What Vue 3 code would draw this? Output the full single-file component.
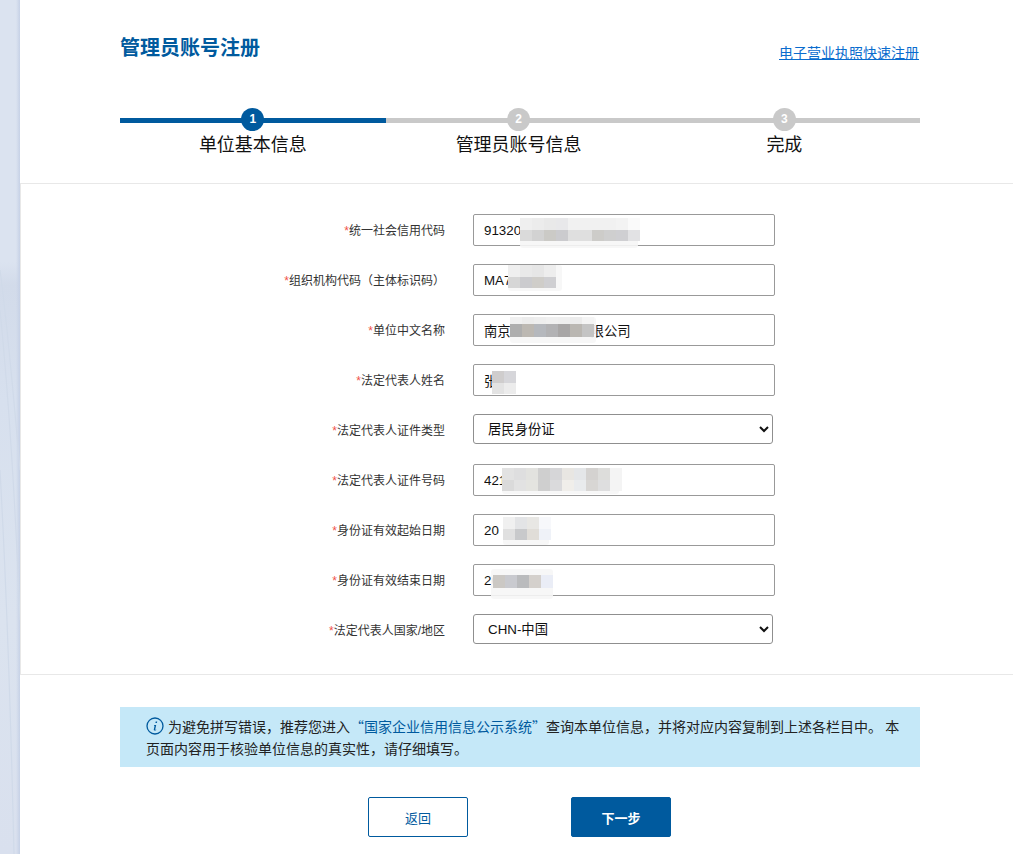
<script setup>
const steps = [
  { n: 1, label: '单位基本信息', active: true },
  { n: 2, label: '管理员账号信息', active: false },
  { n: 3, label: '完成', active: false }
]

const fields = [
  {
    label: '统一社会信用代码', value: '91320',
    patch: { left: 47, top: 4, smear: [0, 0, 118, 30], rows: [
      ['#efefef', '#ececec', '#e9e9e9', '#e8e8ea', '#f1f1f1', '#f1f1f1', '#f1f1f1', '#f1f1f1', '#f3f3f3', '#fafafa'],
      ['#dadada', '#d2d2d2', '#cbcac6', '#cbcbce', '#dfdfdf', '#dfdfdf', '#cdccc9', '#cfcfcf', '#cfcfd2', '#e2e2e4']
    ] }
  },
  {
    label: '组织机构代码（主体标识码）', value: 'MA7',
    patch: { left: 35, top: 1, smear: [0, 0, 54, 26], rows: [
      ['#efefef', '#e9e9e9', '#e6e6e6', '#ededed'],
      ['#d6d6d6', '#cbcbce', '#cfcdc9', '#cfcfd2']
    ] }
  },
  {
    label: '单位中文名称', value: '南京　　　　　　限公司',
    patch: { left: 37, top: 3, smear: [0, 0, 86, 26], h: [6.5, 13], rows: [
      ['#f0f0f0', '#ececec', '#eeeeee', '#f0f0f0', '#efefef', '#ececec', '#f4f4f4'],
      ['#aeaeae', '#bcb8b2', '#b5b8bd', '#b2b2b4', '#a8a6a6', '#bab7b2', '#c4c4c4']
    ] }
  },
  {
    label: '法定代表人姓名', value: '张',
    patch: { left: 19, top: 7, smear: [0, 0, 22, 20], rows: [
      ['#cfcdcd', '#d6d6da'],
      ['#e3e3e3', '#ececec']
    ] }
  },
  { label: '法定代表人证件类型', value: '居民身份证', select: true },
  {
    label: '法定代表人证件号码', value: '421',
    patch: { left: 29, top: 4, smear: [0, 0, 117, 26], rows: [
      ['#e2e2e2', '#dededf', '#e2e2df', '#cfcfcf', '#d6d6d8', '#e8e6e2', '#e4e6e8', '#d4d2d0', '#dddddb', '#f4f4f4'],
      ['#dadada', '#e2e2e2', '#e4e4e0', '#cfcfcf', '#dadadc', '#f0eeea', '#e9ebed', '#d8d6d4', '#dededf', '#f4f4f4']
    ] }
  },
  {
    label: '身份证有效起始日期', value: '20',
    patch: { left: 30, top: 3, smear: [0, 0, 46, 28], rows: [
      ['#f0f0f0', '#e3e4e6', '#e8e7e4', '#f7f8fb'],
      ['#e0e0e0', '#c8c9cb', '#e0ddd8', '#eff2f8']
    ] }
  },
  {
    label: '身份证有效结束日期', value: '20',
    patch: { left: 20, top: 11, smear: [-2, -6, 62, 30], h: [13], rows: [
      ['#cbc8c4', '#c9cacf', '#babbbd', '#d4d0cc', '#eaedf6']
    ] }
  },
  { label: '法定代表人国家/地区', value: 'CHN-中国', select: true }
]

const alertBefore = '为避免拼写错误，推荐您进入'
const alertLink = '“国家企业信用信息公示系统”'
const alertAfter = '查询本单位信息，并将对应内容复制到上述各栏目中。 本'
const alertSecond = '页面内容用于核验单位信息的真实性，请仔细填写。'

const rowHeight = (patch, i) => (patch.h ? patch.h[i] : 11.5) + 'px'
</script>

<template>
  <div class="page">
    <aside class="strip" aria-hidden="true">
      <svg class="curves" width="20" height="854" viewBox="0 0 20 854">
        <path d="M0 270 C8 330 14 400 20 470" />
        <path d="M0 310 C6 370 14 470 20 620" />
        <path d="M0 470 C5 560 10 680 14 854" />
      </svg>
    </aside>

    <main class="panel">
      <header class="head">
        <div class="title-row">
          <h1 class="title">管理员账号注册</h1>
          <a class="quick" href="#">电子营业执照快速注册</a>
        </div>
        <ol class="steps">
          <li v-for="s in steps" :key="s.n" class="step">
            <span class="dot" :class="{ on: s.active }">{{ s.n }}</span>
            <span class="step-label">{{ s.label }}</span>
          </li>
        </ol>
      </header>

      <section class="form">
        <div v-for="f in fields" :key="f.label" class="row">
          <label class="label"><i class="star">*</i>{{ f.label }}</label>
          <select v-if="f.select" class="select">
            <option>{{ f.value }}</option>
          </select>
          <div v-else class="input-wrap">
            <input class="input" type="text" :value="f.value" readonly />
            <div class="patch" :style="{ left: f.patch.left + 'px', top: f.patch.top + 'px' }">
              <span
                class="smear"
                :style="{
                  left: f.patch.smear[0] + 'px',
                  top: f.patch.smear[1] + 'px',
                  width: f.patch.smear[2] + 'px',
                  height: f.patch.smear[3] + 'px'
                }"
              ></span>
              <div
                v-for="(r, i) in f.patch.rows"
                :key="i"
                class="patch-row"
                :style="{ height: rowHeight(f.patch, i) }"
              >
                <span v-for="(c, j) in r" :key="j" class="cell" :style="{ background: c }"></span>
              </div>
            </div>
          </div>
        </div>
      </section>

      <section class="foot">
        <div class="notice">
          <p class="line">
            <svg class="info" width="18" height="18" viewBox="0 0 18 18">
              <circle cx="9" cy="9" r="8" fill="none" stroke="#005a9e" stroke-width="1.3" />
              <path d="M9.7 4.6h1.5l-.3 1.5H9.4z" fill="#005a9e" />
              <path d="M8 8h2.2l-1 4.4c-.1.4.3.5.9.1l.2.4c-1 .9-2.7 1-2.5-.3l.8-3.8H8z" fill="#005a9e" />
            </svg>
            <span>{{ alertBefore }}</span><a class="notice-link" href="#">{{ alertLink }}</a><span>{{ alertAfter }}</span>
          </p>
          <p class="line">{{ alertSecond }}</p>
        </div>
        <div class="actions">
          <button class="btn ghost" type="button">返回</button>
          <button class="btn solid" type="button">下一步</button>
        </div>
      </section>
    </main>
  </div>
</template>

<style>
html, body {
  margin: 0;
  background: #fff;
}
</style>

<style scoped>
.page {
  display: flex;
  width: 1013px;
  height: 854px;
  overflow: hidden;
  font-family: "Liberation Sans", "Noto Sans CJK SC", sans-serif;
  color: #333;
}
.strip {
  flex: 0 0 20px;
  background:
    linear-gradient(90deg, rgba(190, 203, 228, 0) 80%, #c6d1e6 100%),
    linear-gradient(180deg, #dbe3f0 0, #dbe3f0 262px, #d2dbea 285px, #d7e0ee 400px, #dbe3ef 620px, #d9e0ee 854px);
}
.curves {
  display: block;
}
.curves path {
  fill: none;
  stroke: #d0dae9;
  stroke-width: 1.2;
}
.panel {
  flex: 1;
  background: #fff;
}
.head {
  height: 183px;
  box-sizing: border-box;
  padding: 37px 93px 0 100px;
}
.title-row {
  display: flex;
  justify-content: space-between;
  align-items: flex-start;
  height: 71px;
}
.title {
  margin: 0;
  font-size: 20px;
  line-height: 23px;
  font-weight: 700;
  color: #005a9e;
}
.quick {
  margin: 8px 1px 0 0;
  font-size: 14px;
  line-height: 17px;
  color: #0a6cce;
  text-decoration: underline;
}
.steps {
  display: grid;
  grid-template-columns: 265.75px 265.75px 265.75px;
  margin: 0;
  padding: 0;
  list-style: none;
  background:
    linear-gradient(#005a9e, #005a9e) 0 10px / 266px 5px no-repeat,
    linear-gradient(#c9c9c9, #c9c9c9) 0 10px / 100% 5px no-repeat;
}
.step {
  display: flex;
  flex-direction: column;
  align-items: center;
}
.dot {
  width: 23px;
  height: 23px;
  border-radius: 50%;
  background: #c9c9c9;
  color: #fff;
  font-size: 12px;
  font-weight: 700;
  line-height: 22px;
  text-align: center;
}
.dot.on {
  background: #005a9e;
}
.step-label {
  margin-top: 1px;
  font-size: 18px;
  line-height: 26px;
  color: #111;
}
.form {
  box-sizing: border-box;
  height: 492px;
  padding: 30px 0 0;
  border-top: 1px solid #e8e8e8;
  border-left: 1px solid #e8e8e8;
  border-bottom: 1px solid #e8e8e8;
}
.row {
  display: grid;
  grid-template-columns: 424px 302px;
  column-gap: 28px;
  align-items: start;
  height: 32px;
  margin-bottom: 18px;
}
.label {
  font-size: 12px;
  line-height: 34px;
  text-align: right;
  color: #333;
}
.star {
  font-style: normal;
  color: #f0524a;
}
.input-wrap {
  position: relative;
  width: 302px;
  height: 32px;
}
.input {
  display: block;
  box-sizing: border-box;
  width: 302px;
  height: 32px;
  padding: 0 10px;
  border: 1px solid #999;
  border-radius: 2px;
  background: #fff;
  outline: none;
  font: 13.333px "Liberation Sans", "Noto Sans CJK SC", sans-serif;
  color: #111;
}
.select {
  display: block;
  box-sizing: border-box;
  width: 300px;
  height: 30px;
  padding: 0 10px;
  border: 1px solid #8f8f8f;
  border-radius: 3px;
  background: #fff;
  font: 13.333px "Liberation Sans", "Noto Sans CJK SC", sans-serif;
  color: #111;
}
.patch {
  position: absolute;
  pointer-events: none;
}
.smear {
  position: absolute;
  background: rgba(246, 246, 246, 0.9);
  border-radius: 3px;
}
.patch-row {
  position: relative;
  display: flex;
}
.cell {
  flex: 0 0 12px;
  width: 12px;
}
.foot {
  padding: 32px 93px 0 100px;
}
.notice {
  box-sizing: border-box;
  width: 800px;
  height: 60px;
  padding: 8px 19px 8px 26px;
  background: #c5e8f8;
  font-family: "Noto Sans CJK SC", "Liberation Sans", sans-serif;
  font-size: 14px;
  line-height: 22px;
  color: #222;
}
.line {
  margin: 0;
  white-space: nowrap;
}
.info {
  vertical-align: -3px;
  margin-right: 4px;
}
.notice-link {
  color: #005a9e;
  text-decoration: none;
}
.actions {
  display: flex;
  gap: 103px;
  margin: 30px 0 0 248px;
}
.btn {
  width: 100px;
  height: 40px;
  box-sizing: border-box;
  border-radius: 2px;
  border: 1px solid #005a9e;
  font-family: "Liberation Sans", "Noto Sans CJK SC", sans-serif;
  font-size: 13px;
}
.ghost {
  background: #fff;
  color: #005a9e;
}
.solid {
  background: #005a9e;
  color: #fff;
  font-weight: 700;
}
</style>
